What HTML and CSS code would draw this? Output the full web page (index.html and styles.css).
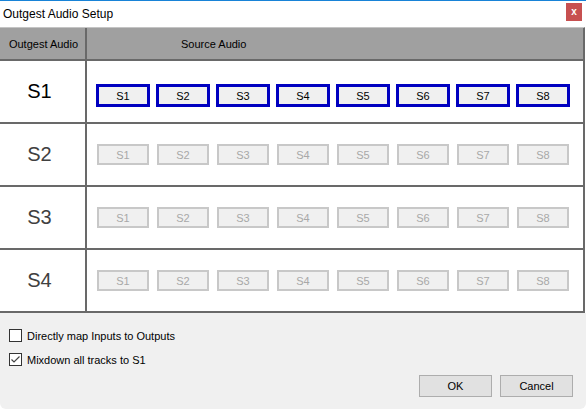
FILE: index.html
```html
<!DOCTYPE html>
<html>
<head>
<meta charset="utf-8">
<link rel="stylesheet" href="styles.css">
</head>
<body>
<div class="window">
  <div class="titlebar">
    <span class="title">Outgest Audio Setup</span>
    <span class="close">x</span>
  </div>
  <div class="grid">
    <div class="hcell hcell-out">Outgest Audio</div>
    <div class="hcell hcell-src">Source Audio</div>

    <div class="label label-active">S1</div>
    <div class="sources sources-first">
      <span class="src src-on">S1</span><span class="src src-on">S2</span><span class="src src-on">S3</span><span class="src src-on">S4</span><span class="src src-on">S5</span><span class="src src-on">S6</span><span class="src src-on">S7</span><span class="src src-on">S8</span>
    </div>

    <div class="label">S2</div>
    <div class="sources">
      <span class="src src-off">S1</span><span class="src src-off">S2</span><span class="src src-off">S3</span><span class="src src-off">S4</span><span class="src src-off">S5</span><span class="src src-off">S6</span><span class="src src-off">S7</span><span class="src src-off">S8</span>
    </div>

    <div class="label">S3</div>
    <div class="sources">
      <span class="src src-off">S1</span><span class="src src-off">S2</span><span class="src src-off">S3</span><span class="src src-off">S4</span><span class="src src-off">S5</span><span class="src src-off">S6</span><span class="src src-off">S7</span><span class="src src-off">S8</span>
    </div>

    <div class="label">S4</div>
    <div class="sources">
      <span class="src src-off">S1</span><span class="src src-off">S2</span><span class="src src-off">S3</span><span class="src src-off">S4</span><span class="src src-off">S5</span><span class="src src-off">S6</span><span class="src src-off">S7</span><span class="src src-off">S8</span>
    </div>
  </div>
  <div class="footer">
    <label class="check"><span class="box"></span>Directly map Inputs to Outputs</label>
    <label class="check"><span class="box"><svg width="11" height="11" viewBox="0 0 11 11"><polyline points="1.5,5.5 4,8 9.5,2.5" fill="none" stroke="#444" stroke-width="1.2"/></svg></span>Mixdown all tracks to S1</label>
    <div class="actions">
      <span class="btn">OK</span>
      <span class="btn">Cancel</span>
    </div>
  </div>
</div>
</body>
</html>
```

FILE: styles.css
```css
html, body {
  margin: 0;
  padding: 0;
  background: #ffffff;
}
body {
  width: 586px;
  height: 409px;
  overflow: hidden;
  font-family: "Liberation Sans", Arial, sans-serif;
}
.window {
  border-top: 1px solid #1883d7;
  height: 408px;
  display: flex;
  flex-direction: column;
}
.titlebar {
  height: 26px;
  display: flex;
  align-items: flex-start;
  justify-content: space-between;
  background: #ffffff;
}
.title {
  font-size: 12px;
  color: #000;
  padding-left: 3px;
  margin-top: 6px;
  line-height: 14px;
}
.close {
  margin-top: 2px;
  margin-right: 4px;
  width: 16px;
  height: 18px;
  background: #c75050;
  color: #fff;
  font-weight: bold;
  font-size: 10px;
  line-height: 17px;
  text-align: center;
}
.grid {
  width: 584px;
  display: grid;
  grid-template-columns: 85px 496px;
  grid-template-rows: 31px 61px 61px 61px 61px;
  column-gap: 2px;
  row-gap: 2px;
  background: #696969;
  border-top: 1px solid #c4c4c4;
  border-right: 1px solid #696969;
  border-bottom: 2px solid #696969;
}
.hcell {
  background: #a0a0a0;
  font-size: 11px;
  color: #000;
  display: flex;
  align-items: center;
}
.hcell-out {
  justify-content: center;
  padding-left: 2px;
}
.hcell-src {
  padding-left: 94px;
}
.label {
  background: #ffffff;
  display: flex;
  align-items: center;
  justify-content: center;
  padding-right: 6px;
  font-size: 20px;
  color: #404040;
}
.label-active {
  color: #000;
}
.sources {
  background: #ffffff;
  display: flex;
  align-items: center;
  padding-left: 9px;
  gap: 6px;
}
.sources-first {
  padding-top: 8px;
}
.src {
  box-sizing: border-box;
  width: 54px;
  height: 23px;
  background: #f0f0f0;
  font-size: 11px;
  display: flex;
  align-items: center;
  justify-content: center;
}
.src-on {
  border: 3px solid #0000c0;
  color: #000;
}
.src-off {
  width: 52px;
  height: 21px;
  margin: 0 1px;
  border: 2px solid #c8c8c8;
  color: #a8a8a8;
}
.footer {
  flex: 1;
  background: #f0f0f0;
  padding: 16px 13px 0 9px;
  display: flex;
  flex-direction: column;
  border-bottom-left-radius: 6px;
  border-bottom-right-radius: 6px;
}
.check {
  display: flex;
  align-items: center;
  height: 13px;
  font-size: 11px;
  color: #000;
  margin-bottom: 11px;
}
.box {
  box-sizing: border-box;
  width: 13px;
  height: 13px;
  border: 1px solid #333;
  background: #fff;
  margin-right: 5px;
  display: flex;
  align-items: center;
  justify-content: center;
}
.actions {
  display: flex;
  justify-content: flex-end;
  gap: 8px;
  margin-top: -2px;
}
.btn {
  box-sizing: border-box;
  width: 73px;
  height: 22px;
  background: #e1e1e1;
  border: 1px solid #adadad;
  font-size: 11px;
  display: flex;
  align-items: center;
  justify-content: center;
  color: #000;
}
```
